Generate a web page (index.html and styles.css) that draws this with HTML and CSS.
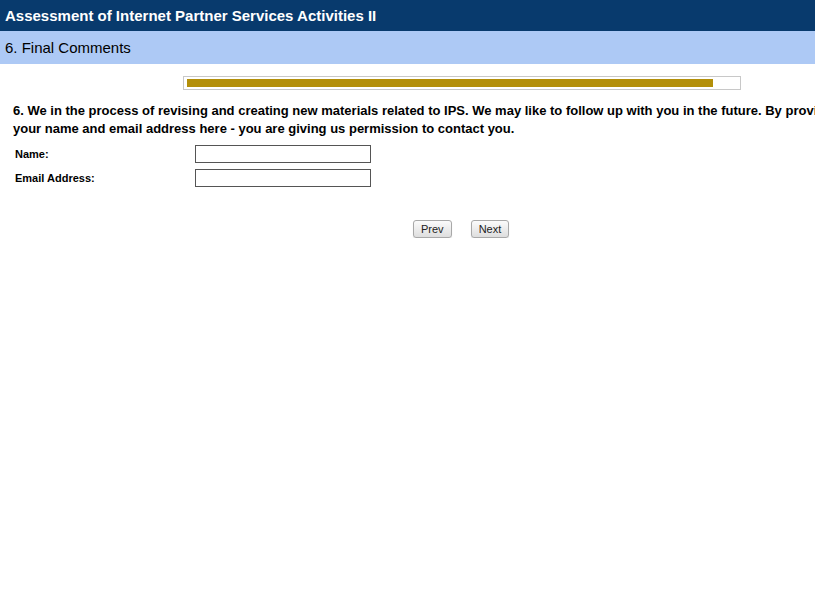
FILE: index.html
```html
<!DOCTYPE html>
<html>

<head>
  <title>Assessment of Internet Partner Services Activities II</title>
  <link rel="stylesheet" href="styles.css">
</head>

<body>
  <div class="survey-title">Assessment of Internet Partner Services Activities II</div>
  <div class="page-title">6. Final Comments</div>

  <div class="progress-wrap">
    <div class="progress">
      <div class="progress-fill" style="width: 95.6%;"></div>
    </div>
  </div>

  <div class="question">
    <p class="question-text">6. We in the process of revising and creating new materials related to IPS. We may like to follow up with you in the future. By providing your name and email address here - you are giving us permission to contact you.</p>

    <div class="field">
      <label for="name">Name:</label>
      <input type="text" id="name">
    </div>
    <div class="field">
      <label for="email">Email Address:</label>
      <input type="text" id="email">
    </div>
  </div>

  <div class="nav-buttons">
    <button type="button">Prev</button>
    <button type="button">Next</button>
  </div>
</body>

</html>
```

FILE: styles.css
```css
/* Global styles */
html,
body {
  overflow-x: hidden;
}

body {
  margin: 0;
  font-family: 'Liberation Sans', Arial, sans-serif;
  color: #000000;
  background-color: #ffffff;
}

/* Header bars */
.survey-title {
  height: 31px;
  padding: 0 5px;
  line-height: 31px;
  background-color: #083a6d;
  color: #ffffff;
  font-size: 15px;
  font-weight: bold;
}

.page-title {
  height: 33px;
  padding: 0 5px;
  line-height: 33px;
  background-color: #adc9f5;
  font-size: 15px;
}

/* Progress bar */
.progress-wrap {
  padding: 12px 0 0 183px;
}

.progress {
  width: 550px;
  padding: 2px 3px;
  border: 1px solid #c8c8c8;
}

.progress-fill {
  height: 8px;
  background-color: #b38f09;
}

/* Question */
.question {
  width: 850px;
  padding: 12px 0 0 13px;
}

.question-text {
  margin: 0 0 7px 0;
  font-size: 13px;
  font-weight: bold;
  line-height: 18px;
}

.field {
  display: flex;
  align-items: center;
  height: 18px;
  margin-bottom: 6px;
  padding-left: 2px;
}

.field label {
  width: 180px;
  font-size: 11px;
  font-weight: bold;
}

.field input {
  width: 172px;
  height: 14px;
  margin: 0;
  padding: 1px;
  border: 1px solid #555555;
  font-size: 12px;
}

/* Navigation buttons */
.nav-buttons {
  display: flex;
  gap: 19px;
  padding: 27px 0 0 413px;
}

.nav-buttons button {
  height: 18px;
  padding: 0 7px;
  border: 1px solid #a8a8a8;
  border-radius: 3px;
  background: linear-gradient(#fbfbfb, #dedede);
  color: #222222;
  font-family: 'Liberation Sans', Arial, sans-serif;
  font-size: 11px;
  line-height: 16px;
  box-shadow: 0 1px 1px rgba(0, 0, 0, 0.12);
}
```
